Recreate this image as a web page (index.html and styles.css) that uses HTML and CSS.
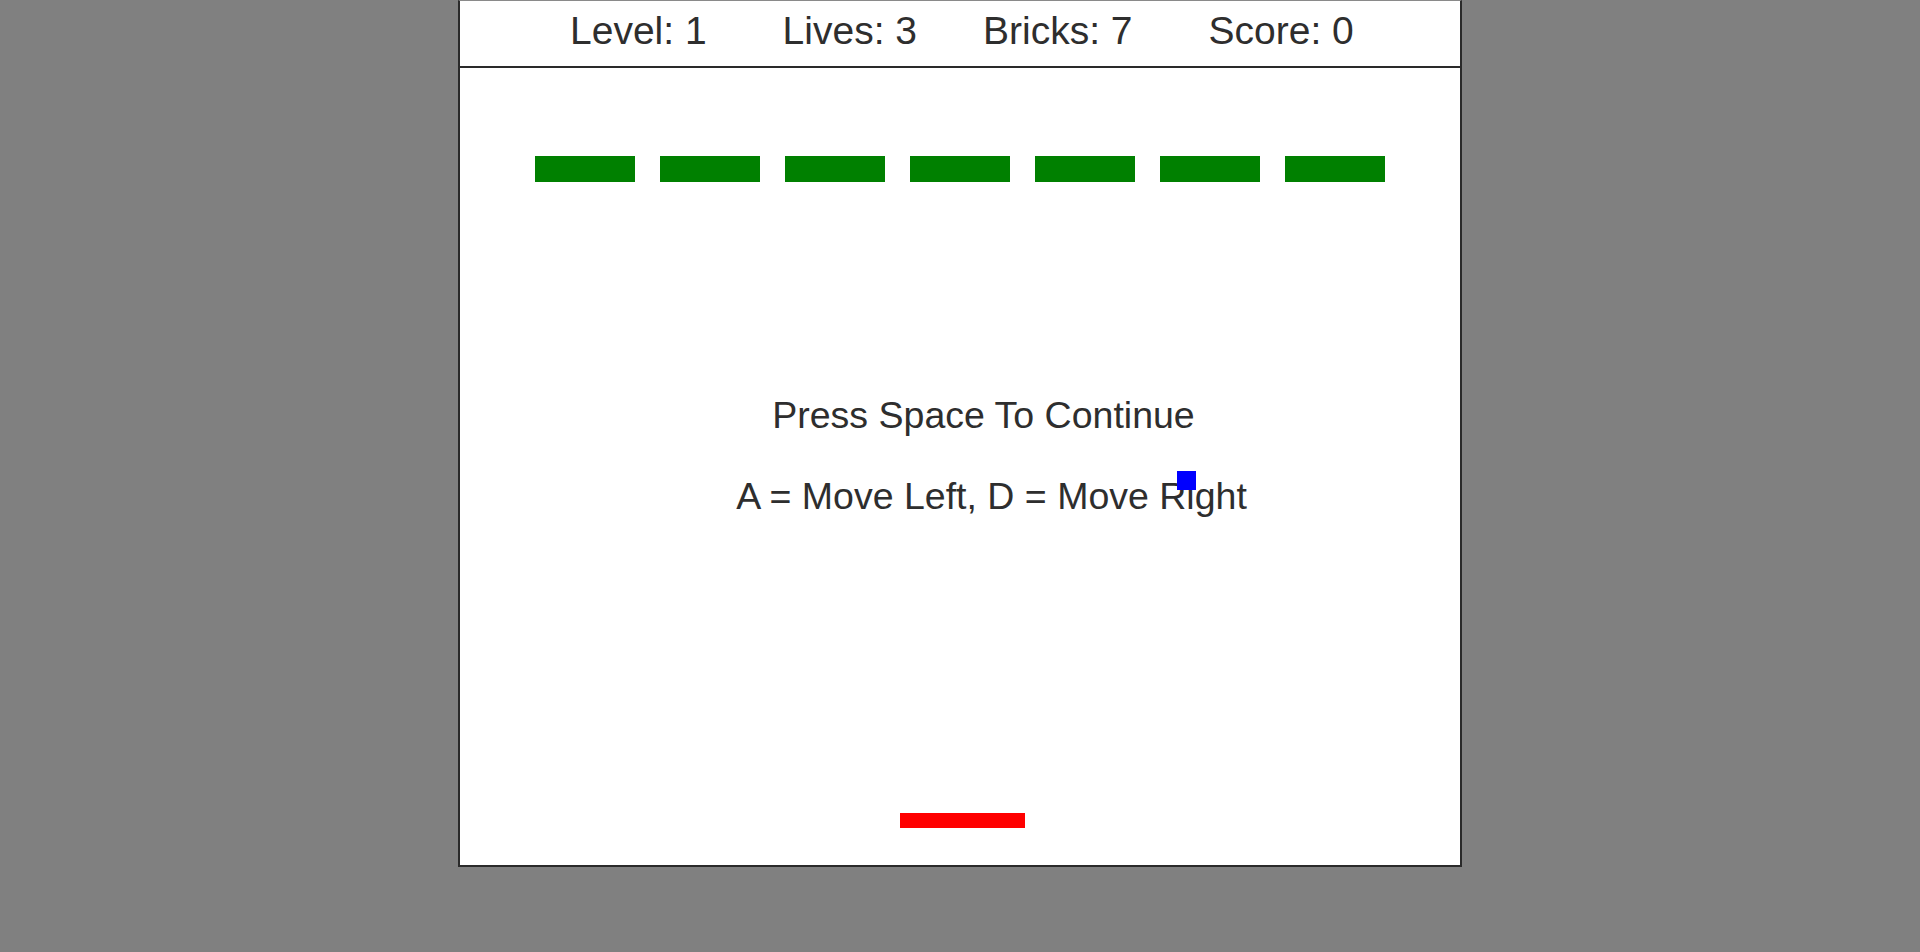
FILE: index.html
```html
<!DOCTYPE html>
<html lang="en">
<head>
<meta charset="utf-8">
<title>Breakout</title>
<link rel="stylesheet" href="styles.css">
</head>
<body>
<div class="game">
  <div class="hud">
    <span class="stat">Level: 1</span>
    <span class="stat">Lives: 3</span>
    <span class="stat stat-bricks">Bricks: 7</span>
    <span class="stat">Score: 0</span>
  </div>
  <div class="field">
    <div class="bricks">
      <div class="brick"></div>
      <div class="brick"></div>
      <div class="brick"></div>
      <div class="brick"></div>
      <div class="brick"></div>
      <div class="brick"></div>
      <div class="brick"></div>
    </div>
    <div class="message">
      <div class="msg-line msg-primary">Press Space To Continue</div>
      <div class="msg-line msg-secondary">A = Move Left, D = Move Right</div>
    </div>
    <div class="ball"></div>
    <div class="paddle"></div>
  </div>
</div>
</body>
</html>
```
FILE: styles.css
```css
html, body {
  margin: 0;
  padding: 0;
}
body {
  background: #808080;
  font-family: "Liberation Sans", Arial, sans-serif;
  color: #2e2e2e;
  height: 952px;
  overflow: hidden;
}
.game {
  width: 1000px;
  margin: 0 auto;
  background: #ffffff;
  border: 2px solid #2a2a2a;
  border-top: 1px solid #8a8a8a;
}
.hud {
  display: flex;
  height: 58px;
  padding: 7px 0 0 110px;
  font-size: 39px;
  line-height: 45px;
  border-bottom: 2px solid #2a2a2a;
}
.stat + .stat {
  margin-left: 76px;
}
.stat + .stat-bricks {
  margin-left: 66px;
}
.field {
  position: relative;
  height: 797px;
}
.bricks {
  display: flex;
  justify-content: center;
  gap: 25px;
  padding-top: 88px;
}
.brick {
  width: 100px;
  height: 26px;
  background: #008000;
}
.message {
  margin-top: 193px;
  font-size: 37.5px;
  line-height: 81px;
  text-align: center;
}
.msg-primary {
  padding-left: 47px;
}
.msg-secondary {
  padding-left: 63px;
}
.ball {
  position: absolute;
  left: 717px;
  top: 403px;
  width: 19px;
  height: 19px;
  background: #0000ff;
}
.paddle {
  position: absolute;
  left: 440px;
  top: 745px;
  width: 125px;
  height: 15px;
  background: #ff0000;
}
```
